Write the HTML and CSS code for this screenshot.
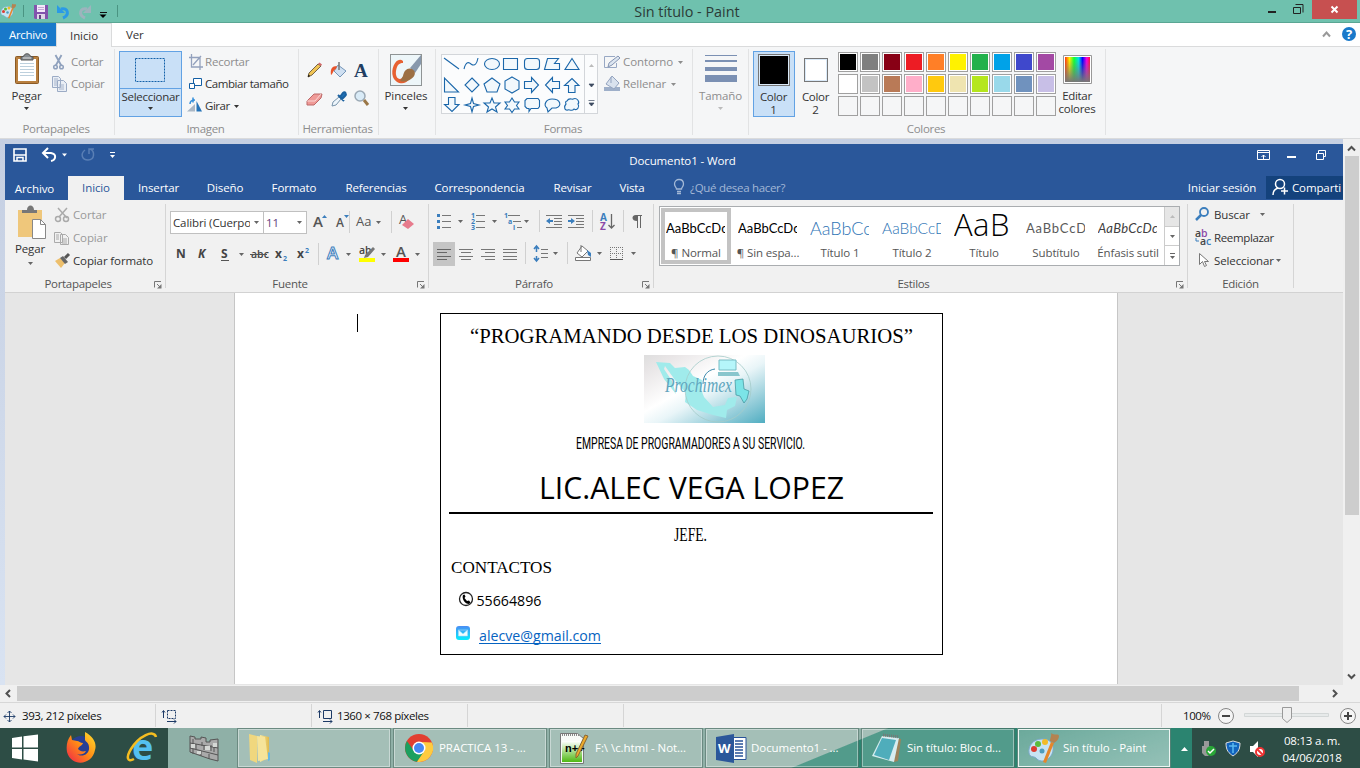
FILE: index.html
```
<!DOCTYPE html>
<html lang="es">
<head>
<meta charset="utf-8">
<title>Sin título - Paint</title>
<link rel="stylesheet" href="styles.css">
</head>
<body>
<svg class="defs" width="0" height="0">
  <defs>
    <symbol id="arr" viewBox="0 0 5 3"><path d="M0 0h5L2.5 3z" fill="currentColor"/></symbol>
    <symbol id="launch" viewBox="0 0 8 8"><path d="M.5 6.500V.5H7M3 3l3 3" fill="none" stroke="#777"/><path d="M7.500 3v4.500H3z" fill="#777"/></symbol>
    <symbol id="palette" viewBox="0 0 32 32"><path d="M15 7C6 7 1 14 2 21c1 5 5 3 7 5 2 3 8 5 13 0 6-5 7-19-7-19z" fill="#c7e3f3" stroke="#7ba9cb"/><circle cx="7" cy="17" r="3" fill="#dc3c31"/><circle cx="11" cy="12" r="3" fill="#5cbb3c"/><circle cx="18" cy="10" r="3" fill="#f3bb27"/><circle cx="15" cy="19" r="2.500" fill="#4e9cbd"/><path d="M24 10l3 1-8 20-3-1z" fill="#e5862b"/><path d="M23 9c0-3 2-6 1-8 3 3 8 0 8 3s-2 5-5 7z" fill="#b48351"/></symbol>
    <linearGradient id="rainbow"><stop stop-color="#f31"/><stop offset=".18" stop-color="#fe0"/><stop offset=".36" stop-color="#1f3"/><stop offset=".55" stop-color="#0de"/><stop offset=".7" stop-color="#00f"/><stop offset=".87" stop-color="#f0d"/><stop offset="1" stop-color="#f13"/></linearGradient>
    <linearGradient id="fade" x2="0" y2="1"><stop offset=".1" stop-color="#777" stop-opacity="0"/><stop offset="1" stop-color="#777"/></linearGradient>
    <linearGradient id="logobg" x2="1" y2="1"><stop stop-color="#dedede"/><stop offset=".12" stop-color="#e8e5e6"/><stop offset=".42" stop-color="#fff"/><stop offset=".55" stop-color="#e9f5f8"/><stop offset="1" stop-color="#50adc1"/></linearGradient>
    <linearGradient id="mailbg" x2="0" y2="1"><stop stop-color="#4b8df4"/><stop offset="1" stop-color="#04efff"/></linearGradient>
    <linearGradient id="fold"><stop stop-color="#f9e9a0"/><stop offset="1" stop-color="#dfba4e"/></linearGradient>
    <linearGradient id="green" x2="0" y2="1"><stop stop-color="#fff"/><stop offset="1" stop-color="#4fb812"/></linearGradient>
    <linearGradient id="fox" x1="1" y1="0" x2="0" y2="1"><stop stop-color="#ffe32e"/><stop offset=".5" stop-color="#ff8a16"/><stop offset="1" stop-color="#f0204d"/></linearGradient>
  </defs>
</svg>

<header class="titlebar">
  <div class="quick">
    <svg width="17" height="17"><use href="#palette" width="16" height="16"/></svg>
    <svg width="17" height="17"><path d="M6.500 2v12" stroke="#4a9482"/></svg>
    <svg width="15" height="17"><path d="M0 2h14v14H1l-1-1z" fill="#8254ad"/><path d="M3 2h8v7H3z" fill="#f3e9fa"/><path d="M4 4.500h6M4 6.500h6" stroke="#c3a9d6"/><path d="M3 11h8v5H3z" fill="#dfd6e8"/><path d="M5 12h2v4H5z" fill="#634383"/></svg>
    <svg width="20" height="17"><path d="M8 2v8h8z" fill="#2a9ae6"/><path d="M12 6c7-2 9 6 2 9" fill="none" stroke="#2a9ae6" stroke-width="3"/></svg>
    <svg width="20" height="17"><path d="M22 2v8h-8z" fill="#9db4bd"/><path d="M18 6c-7-2-9 6-2 9" fill="none" stroke="#9db4bd" stroke-width="3"/></svg>
    <svg width="29" height="17"><path d="M11 9.500h7" stroke="#111"/><path d="M10.500 11.500h7L14 15z"/><path d="M28.500 2v12" stroke="#4a9482"/></svg>
  </div>
  <h1 class="wintitle">Sin título - Paint</h1>
  <div class="winbtns">
    <svg width="44" height="22"><path d="M12 12h8" stroke="#222" stroke-width="2"/><path d="M37.500 7.500h7v6h-7zM39.500 4.500h7.500v8" fill="none" stroke="#222"/></svg>
    <button class="close" aria-label="Cerrar"><svg width="9" height="9"><path d="M1.500 1.500l6 6m0-6l-6 6" stroke="#fff" stroke-width="2"/></svg></button>
  </div>
</header>

<nav class="ptabs">
  <span class="file">Archivo</span><span class="active">Inicio</span><span class="ver">Ver</span>
  <svg width="38" height="22"><path d="M1 13.500l3.500-4 3.500 4" fill="none" stroke="#999" stroke-width="2"/><circle cx="27" cy="11" r="7" fill="#1979ca"/><text x="27" y="15.500" text-anchor="middle" class="help">?</text></svg>
</nav>

<section class="pribbon">
  <div class="pg g-clip">
    <div class="body">
      <div class="big c-paste"><svg width="26" height="39"><rect x="1.500" y="7.500" width="23" height="27" rx="1" fill="#b9803f" stroke="#8b5a25"/><path d="M4 10h18v22H4z" fill="#fff"/><path d="M6 14.500h14m-14 3h14m-14 3h14m-14 3h14m-14 3h14" stroke="#bdd0dd"/><path d="M7 11V8l3-1c0-3 6-3 6 0l3 1v3z" fill="#858b91" stroke="#555"/><path d="M9 9h8" stroke="#ddd"/></svg><span>Pegar</span><svg class="a" viewBox="0 0 5 3"><use href="#arr"/></svg></div>
      <div class="rows dis">
        <div><svg width="18" height="20"><path d="M2.500 3l6 11m0-11l-6 11" stroke="#8fa1bd" stroke-width="1.800"/><circle cx="2.500" cy="15" r="1.800" fill="none" stroke="#8fa1bd" stroke-width="1.500"/><circle cx="8.500" cy="15" r="1.800" fill="none" stroke="#8fa1bd" stroke-width="1.500"/></svg>Cortar</div>
        <div><svg width="18" height="20"><path d="M-.5 2.500h6l2 2v9h-8zM4.500 6.500h6l3 3v8h-9z" fill="#e9eef5" stroke="#9babc5"/><path d="M1 5h4m-4 2h3m-3 2h3m-3 2h3m2 0h5m-5 2h5m-5 2h5" stroke="#a6b4cb"/></svg>Copiar</div>
      </div>
    </div><footer>Portapapeles</footer>
  </div>
  <div class="pg g-img">
    <div class="body">
      <div class="selbtn"><svg width="61" height="36"><rect x="15.500" y="6.500" width="29" height="23" fill="none" stroke="#1261a8" stroke-dasharray="2 1"/></svg><span>Seleccionar</span><svg class="a" viewBox="0 0 5 3"><use href="#arr"/></svg></div>
      <div class="rows">
        <div class="dis"><svg width="17" height="20"><path d="M3.500 2v13H15M1 5.500h11V18M5 13l8-9" fill="none" stroke="#93a1bd" stroke-width="1.300"/></svg>Recortar</div>
        <div><svg width="17" height="20"><path d="M5.500 4.500h8v7h-8z" fill="#fff" stroke="#145fa4"/><path d="M1.500 9.500h5v5h-5z" fill="#fff" stroke="#145fa4"/></svg>Cambiar tamaño</div>
        <div><svg width="17" height="20"><path d="M-1 15.500L7 8v7.500z" fill="#aab7c5"/><path d="M8.500 15.500V5L14 15.500z" fill="#2573b8"/><path d="M2 8c0-4 3-4 5-4M5 1.500v5" stroke="#348fdb" fill="none" stroke-width="1.500"/></svg>Girar<svg class="a" viewBox="0 0 5 3"><use href="#arr"/></svg></div>
      </div>
    </div><footer>Imagen</footer>
  </div>
  <div class="pg g-tools">
    <div class="tools">
      <svg><path d="M2 16l1-4 9-9 3 2-9 9z" fill="#f0c454" stroke="#756447"/><path d="M12 3l1.500-1.500 2.500 2L15 5z" fill="#d36a6a"/><path d="M2 16l.6-2.500L4 15z"/></svg>
      <svg><path d="M8 4l8 6-6 6-6-6z" fill="#cfe0f2" stroke="#7596b8"/><path d="M9 1v8" stroke="#777" stroke-width="1.500"/><path d="M7 5C2 5 0 8 1 14c2-1 2-5 5-6z" fill="#e8542b"/></svg>
      <svg><text x="1" y="16" class="bigA">A</text></svg>
      <svg><path d="M1 12l7-7h8l-1 4-7 7H1z" fill="#ef9a97" stroke="#bc6868"/><path d="M1 12h8l6-7" fill="none" stroke="#fff" opacity=".6"/></svg>
      <svg><path d="M2 17l1-4 6-5 2 2-5 6z" fill="#edf5fb" stroke="#7894ab"/><path d="M8 6l6 6M10 8l3-4c2-2 4 1 2 3l-3 3z" fill="#1e72ba" stroke="#1b619f" stroke-width="2"/></svg>
      <svg><circle cx="7" cy="7" r="5" fill="#d9ebf7" stroke="#9ba9b5" stroke-width="1.500"/><path d="M11 11l4 5" stroke="#9a7747" stroke-width="3"/></svg>
    </div><footer>Herramientas</footer>
  </div>
  <div class="pg g-brush">
    <div class="body"><div class="big"><svg width="32" height="39"><rect x=".5" y="5.500" width="31" height="31" fill="#edf6f9" stroke="#8f9495"/><path d="M13 12C7 7 0 19 3 28c3 7 12 9 16 2l-5-3c-4 6-9 2-8-5 1-6 3-8 7-8z" fill="#e76132"/><path d="M20 19L31 6v9l-6 9z" fill="#8798ac"/><path d="M13 27c1-6 5-9 9-7s4 7-1 10c-4 3-8 3-11 2z" fill="#9c7044"/></svg><span>Pinceles</span><svg class="a" viewBox="0 0 5 3"><use href="#arr"/></svg></div></div>
  </div>
  <div class="pg g-shapes">
    <div class="body">
      <div class="gallery">
        <svg width="142" height="58" fill="#f2f8fc" stroke="#1b67aa" stroke-width="1.100"><path d="M2 3l15 11"/><path d="M22 14c2-8 5-7 7-5 4 3 6-1 7-6" fill="none"/><ellipse cx="50" cy="9" rx="7.500" ry="5.500"/><path d="M61.500 3.500h14v11h-14z"/><rect x="82.500" y="3.500" width="15" height="11" rx="3"/><path d="M102.500 14.500l3-11h11l-4 5h5v6z"/><path d="M130 3.500l7 11h-14z"/>
        <path d="M2.500 23v14h14z"/><path d="M30 23l7 7-7 7-7-7z"/><path d="M50 23l8 6-3 8H45l-3-8z"/><path d="M70 22l7 4v8l-7 4-7-4v-8z"/><path d="M82.500 26.500h7v-4l7 7.500-7 7.500v-4h-7z"/><path d="M117.500 26.500h-7v-4l-7 7.500 7 7.500v-4h7z"/><path d="M126.500 37.500v-7h-4l7.500-7 7 7h-4v7z"/>
        <path d="M6.500 42.500v7h-4l7.500 7 7-7h-4v-7z"/><path d="M30 43l1.500 5.500L37 50l-5.500 1.500L30 57l-1.500-5.500L23 50l5.500-1.500z"/><path d="M50 43l2 5h6l-4.500 4 1.500 5-5-3-5 3 1.500-5-4.500-4h6z"/><path d="M70 43l2.500 4H77l-2.500 3.500L77 54h-4.500L70 57.500 67.500 54H63l2.500-3.500L63 47h4.500z"/><path d="M85 43.500h11l1.500 2v6l-1.500 2h-7l-2 3v-3h-2l-2-2v-6z"/><path d="M105 53c-4-3-1-9 5-9 9 0 10 7 4 9h-4l-4 4z"/><path d="M125 46c2-4 5-1 6-2 4-2 7 3 5 5 2 3-1 7-4 5-2 3-5 0-6 1-4 1-4-4-2-6-1-2 0-3 1-3z"/></svg>
        <div class="gscroll"><svg width="12" height="58"><path d="M4 12h5L6.500 9z" fill="#bbb"/><path d="M4 29h5l-2.500 3zM4 48h5l-2.500 3zM3.500 45.500h6" fill="#3c4a60" stroke="#3c4a60" stroke-width=".7"/></svg></div>
      </div>
      <div class="rows dis">
        <div><svg width="20" height="20"><path d="M12 4.500H1.500v11h12V11" fill="none" stroke="#98a8c4"/><path d="M5 15l1-4 9-7 2 2-8 7z" fill="#dce5f0" stroke="#8494b2"/></svg>Contorno<svg class="a" viewBox="0 0 5 3"><use href="#arr"/></svg></div>
        <div><svg width="20" height="20"><path d="M1 13h16v4H1z" fill="#9eafc9"/><path d="M9 2l7 7-5 6-8-5z" fill="#d9e2ee" stroke="#93a3bf"/><path d="M8 3v6" stroke="#93a3bf"/></svg>Rellenar<svg class="a" viewBox="0 0 5 3"><use href="#arr"/></svg></div>
      </div>
    </div><footer>Formas</footer>
  </div>
  <div class="pg g-size"><div class="body"><div class="big dis"><svg width="32" height="39" fill="#7b90b3"><path d="M0 6h32v1H0zM0 11h32v2H0zM0 18h32v4H0zM0 26h32v7H0z"/></svg><span>Tamaño</span><svg class="a" viewBox="0 0 5 3"><use href="#arr"/></svg></div></div></div>
  <div class="pg g-colors">
    <div class="body">
      <div class="color c1"><i></i><span>Color<br>1</span></div>
      <div class="color c2"><i></i><span>Color<br>2</span></div>
      <div class="swatches"><i class="k0"></i><i class="k1"></i><i class="k2"></i><i class="k3"></i><i class="k4"></i><i class="k5"></i><i class="k6"></i><i class="k7"></i><i class="k8"></i><i class="k9"></i><i class="l0"></i><i class="l1"></i><i class="l2"></i><i class="l3"></i><i class="l4"></i><i class="l5"></i><i class="l6"></i><i class="l7"></i><i class="l8"></i><i class="l9"></i><i></i><i></i><i></i><i></i><i></i><i></i><i></i><i></i><i></i><i></i></div>
      <div class="edit"><svg width="28" height="39"><path d="M.5 6.500h28v28H.5z" fill="#fff" stroke="#999"/><path d="M2 8h25v25H2z" fill="url(#rainbow)"/><path d="M2 8h25v25H2z" fill="url(#fade)"/></svg><span>Editar<br>colores</span></div>
    </div><footer>Colores</footer>
  </div>
</section>

<main class="canvas">
  <div class="work">
    <div class="word">
      <div class="wtitle">
        <svg class="wq" width="120" height="32" fill="none" stroke="#fff"><path d="M9 5h12v12H9z" stroke-width="1.600" /><path d="M9 11h12" stroke-width="1.500"/><path d="M12 17v-3.500h6V17" stroke-width="1.500"/><path d="M39 9h7c6 1 5 7 0 8" stroke-width="2"/><path d="M43 4l-5 5 5 5" stroke-width="2"/><path d="M57 9.500h5l-2.500 3z" fill="#fff" stroke="none"/><path d="M80 6c-5 4-3 10 3 10 7 0 7-9 2-11m-1 5V5h5" stroke="#5a7fb5" stroke-width="1.500"/><path d="M105 8.500h5"/><path d="M105 11h5l-2.500 3z" fill="#fff" stroke="none"/></svg>
        <span>Documento1 - Word</span>
        <svg class="wb" width="90" height="32" fill="none" stroke="#fff"><path d="M4.500 6.500h12v9h-12zM4 8.500h13M10.500 15v-4m-2 2l2-2 2 2"/><path d="M34 13h9" stroke-width="2"/><path d="M63.500 9.500h7v6h-7zM65.500 9V6.500h7v6H71"/></svg>
      </div>
      <nav class="wtabs"><span>Archivo</span><span class="on">Inicio</span><span>Insertar</span><span>Diseño</span><span>Formato</span><span>Referencias</span><span>Correspondencia</span><span>Revisar</span><span>Vista</span>
        <span class="tell"><svg width="17" height="18"><path d="M3.500 12c0-2-2-2-2-5 0-6 9-6 9 0 0 3-2 3-2 5zM4 14.500h4M4 16.500h4" fill="none" stroke="#a3b8d6" stroke-width="1.300"/></svg>¿Qué desea hacer?</span>
        <span class="login">Iniciar sesión</span>
        <span class="share"><svg width="20" height="18" fill="none" stroke="#fff" stroke-width="1.500"><circle cx="8" cy="6" r="4.500"/><path d="M1 17c0-4 2-6 5-7m3 3h7m-3.500-3.500v7"/></svg>Comparti</span>
      </nav>
      <section class="wribbon">
        <div class="wg w-clip">
          <div class="wbody">
            <div class="wbig"><svg width="32" height="37"><path d="M4 6h24v27H4z" fill="#efc77b"/><path d="M8 9V6h5c0-6 7-6 7 0h3v3z" fill="#777"/><path d="M18.500 15.500h8l5 5v14h-13z" fill="#fff" stroke="#888"/><path d="M26.500 15.500v5h5" fill="none" stroke="#888"/></svg><span>Pegar</span><svg class="a" viewBox="0 0 5 3"><use href="#arr"/></svg></div>
            <div class="rows">
              <div class="dis"><svg width="18" height="18" fill="none" stroke="#aaa" stroke-width="1.500"><path d="M3 2l9 10m0-10L4 11"/><circle cx="3" cy="13" r="2.500"/><circle cx="11" cy="13" r="2.500"/></svg>Cortar</div>
              <div class="dis"><svg width="18" height="18" fill="#f1f1f1" stroke="#aaa"><path d="M-.5 3.500h6l2 2v8h-8zM5.500 5.500h5l3 3v7h-8z"/><path d="M1 6h3M1 8h3m-3 2h3m3 0h5m-5 2h5m-5 2h5"/></svg>Copiar</div>
              <div><svg width="18" height="18"><path d="M0 9l5-3 5 5-4 5z" fill="#edbf6c"/><path d="M5 6l3-2 5 6-3 2z" fill="#666"/><path d="M10 6l4-4" stroke="#555" stroke-width="3"/></svg>Copiar formato</div>
            </div>
          </div><footer><span>Portapapeles</span><svg><use href="#launch"/></svg></footer>
        </div>
        <div class="wg w-font">
          <div class="wbody col">
            <div class="f1"><span class="combo"><b>Calibri (Cuerpo)</b><svg class="a" viewBox="0 0 5 3"><use href="#arr"/></svg></span><span class="combo two"><b>11</b><svg class="a" viewBox="0 0 5 3"><use href="#arr"/></svg></span>
              <svg><text x="6" y="16" class="g15">A</text><path d="M15 7h5l-2.500-3z" fill="#3b7ebd"/></svg><svg><text x="6" y="16" class="g13 m">A</text><path d="M14 4h5l-2.500 3z" fill="#3b7ebd"/></svg><svg><path d="M1.500 0v22" stroke="#d0d0d0"/></svg><svg><text x="0" y="15" class="g13">Aa</text><path d="M20 10h5l-2.500 3z" fill="#666"/></svg><svg><path d="M1.500 0v22" stroke="#d0d0d0"/></svg><svg><text x="0" y="13" class="g13">A</text><path d="M3 14l6-6 6 5-6 5z" fill="#e77b8d"/></svg></div>
            <div class="f2"><svg><text y="17" class="bd">N</text></svg><svg><text y="17" class="bd it">K</text></svg><svg><text y="17" class="bd">S</text><path d="M0 19.500h8" stroke="#555"/><path d="M18 12h5l-2.500 3z" fill="#666"/></svg><svg><text y="17" class="bs">abc</text><path d="M-1 13.500h17" stroke="#555"/></svg><svg><text y="17" class="bd">x</text><text x="8" y="20" class="sub">2</text></svg><svg><text y="17" class="bd">x</text><text x="8" y="12" class="sub">2</text></svg><svg><path d="M.5 2v22" stroke="#d0d0d0"/></svg><svg><text y="18" class="glow">A</text><path d="M19 12h5l-2.500 3z" fill="#666"/></svg><svg><text y="13" class="bs">ab</text><path d="M6 14l8-8 2 2-7 8-4 1z" fill="#777"/><path d="M0 17h16v4H0z" fill="#ff0"/><path d="M22 12h5l-2.500 3z" fill="#666"/></svg><svg><text x="3" y="16" class="g15">A</text><path d="M0 17h16v4H0z" fill="#f00"/><path d="M22 12h5l-2.500 3z" fill="#666"/></svg></div>
          </div><footer><span>Fuente</span><svg><use href="#launch"/></svg></footer>
        </div>
        <div class="wg w-par">
          <div class="wbody col">
            <div class="p1">
              <svg><path d="M5 5.500h9m-9 6h9m-9 6h9" stroke="#777"/><path d="M0 4h3v3H0zm0 6h3v3H0zm0 6h3v3H0z" fill="#3b7ebd"/><path d="M21 10h5l-2.500 3z" fill="#666"/></svg>
              <svg><path d="M5 5.500h9m-9 6h9m-9 6h9" stroke="#777"/><text y="8" class="num">1</text><text y="14" class="num">2</text><text y="20" class="num">3</text><path d="M21 10h5l-2.500 3z" fill="#666"/></svg>
              <svg><path d="M4 5.500h12m-7 6h8m-4 6h5" stroke="#777"/><text y="8" class="num">1</text><text x="4" y="14" class="num">a</text><text x="9" y="20" class="num">i</text><path d="M20 10h5l-2.500 3z" fill="#666"/></svg>
              <svg><path d="M.5 0v22" stroke="#d0d0d0"/></svg>
              <svg><path d="M0 5.500h16M8 8.500h8m-8 3h8m-8 3h8M0 17.500h16" stroke="#777"/><path d="M0 11l4-3v2h3v2H4v2z" fill="#3b7ebd"/></svg>
              <svg><path d="M0 5.500h16M8 8.500h8m-8 3h8m-8 3h8M0 17.500h16" stroke="#777"/><path d="M7 11L3 8v2H0v2h3v2z" fill="#3b7ebd"/></svg>
              <svg><path d="M.5 0v22" stroke="#d0d0d0"/></svg>
              <svg><text y="11" class="az">A</text><text y="20" class="az z">Z</text><path d="M11.500 4v14m-3-3l3 3 3-3" fill="none" stroke="#666" stroke-width="1.300"/></svg>
              <svg><path d="M.5 0v22" stroke="#d0d0d0"/></svg>
              <svg><path d="M5.500 5v13M8.500 5v13M4 5.500h6" stroke="#666"/><path d="M5 5C-1 4-1 11 5 11z" fill="#666"/></svg>
            </div>
            <div class="p2">
              <svg class="sel"><path d="M4 7.500h14M4 10.500h10M4 14.500h14M4 17.500h10" stroke="#666"/></svg>
              <svg><path d="M4 7.500h14M6 10.500h10M4 14.500h14M6 17.500h10" stroke="#777"/></svg>
              <svg><path d="M4 7.500h14M8 10.500h10M4 14.500h14M8 17.500h10" stroke="#777"/></svg>
              <svg><path d="M4 7.500h14M4 10.500h14M4 14.500h14M4 17.500h14" stroke="#777"/></svg>
              <svg><path d="M4.500 0v22" stroke="#d0d0d0"/></svg>
              <svg><path d="M3.500 5v5m0 4v5M1 7l2.500-3L6 7M1 16l2.500 3L6 16" fill="none" stroke="#3b7ebd" stroke-width="1.500"/><path d="M8 7.500h7m-7 4h7m-7 4h7" stroke="#777"/><path d="M20 10h5l-2.500 3z" fill="#666"/></svg>
              <svg><path d="M.5 0v22" stroke="#d0d0d0"/></svg>
              <svg><path d="M7 4l6 5-6 6-5-4zM6 3v7M.5 15.500h15v3H.5z" fill="#fff" stroke="#777"/><path d="M12 8l4 3v4l-3-2z" fill="#3b7ebd"/><path d="M22 10h5l-2.500 3z" fill="#666"/></svg>
              <svg><path d="M.5 5v12M12.500 5v12M6.500 5v12M0 5.500h13M0 11.500h13" stroke="#777" stroke-dasharray="1 1"/><path d="M0 17.500h13" stroke="#555"/><path d="M21 10h5l-2.500 3z" fill="#666"/></svg>
            </div>
          </div><footer><span>Párrafo</span><svg><use href="#launch"/></svg></footer>
        </div>
        <div class="wg w-sty">
          <div class="wbody"><div class="styles">
            <div class="st cur"><p>AaBbCcDc</p><span>¶ Normal</span></div>
            <div class="st"><p>AaBbCcDc</p><span>¶ Sin espa...</span></div>
            <div class="st"><p class="t1">AaBbCc</p><span>Título 1</span></div>
            <div class="st"><p class="t2">AaBbCcD</p><span>Título 2</span></div>
            <div class="st"><p class="t0">AaB</p><span>Título</span></div>
            <div class="st"><p class="ts">AaBbCcD</p><span>Subtítulo</span></div>
            <div class="st"><p class="te">AaBbCcDc</p><span>Énfasis sutil</span></div>
            <div class="sb"><i><svg class="a up" viewBox="0 0 5 3"><use href="#arr"/></svg></i><i><svg class="a" viewBox="0 0 5 3"><use href="#arr"/></svg></i><i class="more"><svg class="a" viewBox="0 0 5 3"><use href="#arr"/></svg></i></div>
          </div></div><footer><span>Estilos</span><svg><use href="#launch"/></svg></footer>
        </div>
        <div class="wg w-ed">
          <div class="wbody"><div class="rows">
            <div><svg width="19" height="18"><circle cx="9" cy="6" r="4" fill="none" stroke="#3b7ebd" stroke-width="1.800"/><path d="M6 9l-5 5" stroke="#3b7ebd" stroke-width="2.500"/></svg>Buscar<svg class="a far" viewBox="0 0 5 3"><use href="#arr"/></svg></div>
            <div><svg width="19" height="18"><text x="0" y="8" class="bs">a<tspan fill="#8b4aa8">b</tspan></text><text x="5" y="16" class="bs">a<tspan fill="#3b7ebd">c</tspan></text><path d="M1 9v3h3" fill="none" stroke="#3b7ebd"/></svg>Reemplazar</div>
            <div><svg width="19" height="18"><path d="M4.500 1.500v11l3-3 2 5 2-1-2-4h4z" fill="#fff" stroke="#777"/></svg>Seleccionar<svg class="a" viewBox="0 0 5 3"><use href="#arr"/></svg></div>
          </div></div><footer><span>Edición</span></footer>
        </div>
      </section>
      <section class="doc">
        <div class="page">
          <i class="caret"></i>
          <article class="card">
            <svg width="501" height="340">
              <text x="29" y="29" textLength="443" lengthAdjust="spacingAndGlyphs" class="cserif" font-size="22">“PROGRAMANDO DESDE LOS DINOSAURIOS”</text>
              <g transform="translate(203 41)"><path d="M0 0h121v68H0z" fill="url(#logobg)"/><path d="M12 7l14 1 5 5 10-1 4 3 4 6 9 4-1 9 3 8 9 10 12-2 3-7 9-1-2 9-8 4-1 8-13-3-16-5-12-8 1-9-11-13-10-14-1 3 8 12 4 13-12-15z" fill="#a0ebeb"/><circle cx="74" cy="34" r="33" fill="none" stroke="#a5cbc9" stroke-width=".8"/><path d="M75 5h17v10H75z" fill="#b5f6fa" stroke="#78bcc4"/><path d="M74 17h20l2 4H74z" fill="#89c6cd"/><path d="M91 25l8-1 1 10 5 2-2 8-3 4-4-7-4-1z" fill="#7be4e7" stroke="#3d9099" stroke-width=".7"/><path d="M59 29c0-8 4-14 12-15" fill="none" stroke="#408caf"/><text x="21" y="37" textLength="67" lengthAdjust="spacingAndGlyphs" class="brand">Prochimex</text></g>
              <text x="135" y="135" textLength="229" lengthAdjust="spacingAndGlyphs" class="cond">EMPRESA DE PROGRAMADORES A SU SERVICIO.</text>
              <text x="98" y="185" textLength="305" lengthAdjust="spacingAndGlyphs" class="name">LIC.ALEC VEGA LOPEZ</text>
              <path d="M8 199h484" stroke="#000" stroke-width="2"/>
              <text x="233" y="227" textLength="33" lengthAdjust="spacingAndGlyphs" class="cserif" font-size="18">JEFE.</text>
              <text x="10" y="259" textLength="101" lengthAdjust="spacingAndGlyphs" class="cserif" font-size="17">CONTACTOS</text>
              <circle cx="25" cy="285" r="6.500" fill="#fff" stroke="#222" stroke-width="1.300"/><path d="M22 281l1.500-.5 1 2-1 1.500 2.500 3 2-.5 1.500 2-1.500 1.500c-4 0-7.500-5-6-9z"/>
              <text x="35.500" y="292" textLength="65" lengthAdjust="spacingAndGlyphs" class="small">55664896</text>
              <rect x="15" y="312" width="14" height="14" rx="3" fill="url(#mailbg)"/><path d="M17.500 316h9v6h-9zl4.500 4 4.500-4" fill="#eefcff" stroke="#abdcf7" stroke-width=".6"/>
              <a href="#mail"><text x="38" y="327" textLength="122" lengthAdjust="spacingAndGlyphs" class="small link">alecve@gmail.com</text></a><path d="M38 329.500h122" stroke="#0563c1"/>
            </svg>
          </article>
        </div>
      </section>
    </div>
    <div class="vscroll"><svg width="17" height="17"><path d="M5 11.500L8.500 8l3.500 3.500" fill="none" stroke="#505050" stroke-width="2"/></svg><i></i><svg width="17" height="17"><path d="M5 6.500l3.500 3.500L12 6.500" fill="none" stroke="#505050" stroke-width="2"/></svg></div>
  </div>
  <div class="hscroll"><svg width="17" height="17"><path d="M10 5L6.500 8.500 10 12" fill="none" stroke="#505050" stroke-width="2"/></svg><i></i><svg width="17" height="17"><path d="M7 5l3.500 3.500L7 12" fill="none" stroke="#505050" stroke-width="2"/></svg></div>
</main>

<div class="status">
  <span class="s0"><svg width="22" height="16"><path d="M4 8.500h11M9.500 3v11M6 6.500l-2 2 2 2m7-4l2 2-2 2M7.500 5l2-2 2 2m-4 7l2 2 2-2" fill="none" stroke="#1c3a66" stroke-width=".9"/></svg>393, 212 píxeles</span>
  <span><svg width="22" height="16" fill="none" stroke="#1c3a66"><path d="M5.500 2.500h8v8h-8z" stroke-dasharray="2 1"/><path d="M1.500 3v7M0 4.500l1.500-2 1.500 2M5 13.500h9m-2-2l2 2-2 2"/></svg></span>
  <span><svg width="19" height="16" fill="none" stroke="#1c3a66"><path d="M5.500 2.500h8v8h-8zM1.500 3v7M0 4.500l1.500-2 1.500 2M5 13.500h9m-2-2l2 2-2 2"/></svg>1360 × 768 píxeles</span>
  <span></span><span class="grow"></span>
  <span class="zoom">100%<svg width="149" height="24"><circle cx="15" cy="12" r="7.500" fill="#f5f5f5" stroke="#888"/><path d="M11 12h8" stroke="#444" stroke-width="2"/><path d="M33.500 9.500h84v3h-84z" fill="#e7eaea" stroke="#d3d7d7"/><path d="M71.500 3.500h9v11l-4.500 4-4.500-4z" fill="#efefef" stroke="#999"/><circle cx="137" cy="12" r="7.500" fill="#f5f5f5" stroke="#888"/><path d="M133 12h8m-4-4v8" stroke="#444" stroke-width="2"/></svg></span>
</div>

<footer class="taskbar">
  <div class="dark left">
    <svg width="50" height="40"><path d="M12 10l10-1.500v11H12zm11.500-1.700L38 6.500v13H23.500zM12 21h10v10.500L12 30zm11.500 0H38v12.500l-14.500-2z" fill="#fff"/></svg>
    <svg width="62" height="40"><circle cx="31" cy="20" r="12" fill="#283f94"/><path d="M35 4c9 5 12 12 10 18-3 16-24 17-28 2-1-6 0-12 4-17l1 5 5 1c2 0 3 2 6 2-1 3-4 3-5 6 2 2 4 3 8 2-2 4-7 4-9 3 5 4 13 0 12-7 0-4-3-5-4-7z" fill="url(#fox)"/></svg>
    <svg width="56" height="40"><text x="20" y="32" class="ie">e</text><path d="M22 31c-7 4-8-2-3-10C27 8 42 1 44 9" fill="none" stroke="#f5bd21" stroke-width="2.500"/></svg>
  </div>
  <div class="mid">
    <div class="wall"><svg width="32" height="28" fill="#aaa" stroke="#555"><path d="M2 1l5 1v2h6V2l5 1v4h4V5l8-1v22l-8-2L2 17z"/><path d="M2 8l28 5M2 13l28 7M8 9v5m8-4v5m7-5v6M5 4v5m9-2v4m12 1v5M5 14v5m8-3v5m8-2v5"/><path d="M3 9h4v4H3zm14 2h5v4h-5zM9 16h4v3H9zM25 8h4v4h-4z" fill="#d5d8d5" stroke="none"/></svg></div>
    <div class="tb"><svg width="32" height="32"><path d="M13 3l9 2v21l-9 4z" fill="url(#fold)"/><path d="M2 2l8 2v27l-7-3z" fill="#f0d77e"/><path d="M10 4l8 1 3 22-10 2z" fill="#f6e49a"/><path d="M21 20l2 1v7l-2 1z" fill="#65b7e4"/></svg></div>
    <div class="tb"><svg width="32" height="32"><circle cx="16" cy="16" r="14" fill="#e13f31"/><path d="M3.900 9A14 14 0 0 0 14 29.800L22 19l-11 0z" fill="#1ba05f"/><path d="M29 10.500A14 14 0 0 1 14 29.800L22 18l-3-8z" fill="#fecb40"/><circle cx="16" cy="16" r="6.500" fill="#fff"/><circle cx="16" cy="16" r="5" fill="#4688f4"/></svg><span>PRACTICA 13 - ...</span></div>
    <div class="tb"><svg width="32" height="32"><path d="M1.500 1.500h17l6 5v25h-23z" fill="#f8faf7" stroke="#777"/><path d="M3 9h20v21H3z" fill="url(#green)"/><path d="M3 3h17" stroke="#888" stroke-dasharray="1 1" stroke-width="2"/><text x="6" y="20" class="npp">n++</text><path d="M26 3l3 1-10 20-2 2 0-4z" fill="#edaa2b" stroke="#896633"/></svg><span>F:\ \c.html - Not...</span></div>
    <div class="tb"><svg width="32" height="32"><path d="M14 5.500h17v22H14z" fill="#fff" stroke="#285399"/><path d="M20 9h8m-8 3h8m-8 3h8m-8 3h8m-8 3h8m-8 3h8" stroke="#285399" stroke-width="1.500"/><path d="M1 5l18-3v29L1 28z" fill="#2b579a"/><text x="3" y="21" class="wordw">W</text></svg><span>Documento1 - ...</span></div>
    <div class="tb"><svg width="32" height="32"><path d="M12 4l18 3-3 22-4 1z" fill="#9d835b"/><path d="M11 4l17 2-5 24L1 24z" fill="#d7edf0"/><path d="M11 6l14 2-7 20-15-5z" fill="#4fadbb"/><path d="M12 3l16 2" stroke="#777" stroke-dasharray="1 1" stroke-width="3"/></svg><span>Sin título: Bloc d...</span></div>
    <div class="tb act"><svg width="32" height="32"><use href="#palette" width="32" height="32"/></svg><span>Sin título - Paint</span></div>
    <svg class="tray" width="21" height="40"><path d="M10 23h7l-3.500-4z" fill="#fff"/></svg>
  </div>
  <div class="dark right">
    <svg width="80" height="40"><path d="M12 13h5v5h-5zM10 18h9v7l-3 3h-3l-3-3z" fill="#999"/><circle cx="19" cy="23" r="5" fill="#29a637"/><path d="M16 23l2 2 4-4" fill="none" stroke="#fff" stroke-width="1.500"/><path d="M34 15l7-2 7 2c0 8-3 10-7 13-4-3-7-5-7-13z" fill="#1264bd" stroke="#ddd"/><path d="M41 15v10M37 18h8" stroke="#5bb9f1" stroke-width="1.500"/><path d="M58 18h3l5-5v16l-5-5h-3z" fill="#fff"/><circle cx="68" cy="24" r="4" fill="#fff" stroke="#e33" stroke-width="2"/><path d="M65 21l6 6" stroke="#e33" stroke-width="2"/></svg>
    <div class="clock">08:13 a. m.<br>04/06/2018</div>
  </div>
</footer>
</body>
</html>
```
FILE: styles.css
```
*{box-sizing:border-box}
body{margin:0;width:1360px;height:768px;overflow:hidden;font:11.5px/16px "Open Sans","Noto Sans",sans-serif;letter-spacing:-.3px;color:#333;white-space:nowrap}
svg{display:block;flex:none;overflow:visible}
svg text{letter-spacing:0}
.defs{position:absolute}
h1,p{margin:0;font-weight:400}
i{font-style:normal;display:block}
.a{width:5px;height:3px}

.titlebar{height:23px;background:#6fc1ae;border-bottom:1px solid #5aa693;display:flex}
.quick{width:118px;display:flex;padding-top:3px}
.wintitle{flex:1;text-align:center;font-size:14.4px;line-height:24px;letter-spacing:0;color:#2b3b37}
.winbtns{width:104px;display:flex;justify-content:space-between;padding-right:3px}
.close{width:45px;height:19px;border:0;padding:0;background:#c75050;display:grid;place-items:center}
.ptabs{height:24px;background:#fff;border-bottom:1px solid #dadbdc;display:flex;line-height:24px;letter-spacing:-.1px}
.file{width:56px;height:23px;background:#1979ca;color:#fff;text-align:center;letter-spacing:-.3px}
.active{width:56px;height:24px;border:1px solid #dadbdc;border-bottom:0;background:#f5f6f7;text-align:center}
.ver{padding-left:14px;flex:1}
.help{font:bold 13px "Open Sans",sans-serif;fill:#fff}

.pribbon{height:92px;background:#f5f6f7;border-bottom:1px solid #dadbdc;display:flex;padding-top:2px}
.pg{height:86px;border-right:1px solid #e2e3e4}
.pg footer{line-height:17px;text-align:center;color:#8d8d8d;padding-right:2px}
.body{height:71px;display:flex}
.dis{color:#8d8d8d}
.big{display:flex;flex-direction:column;align-items:center;letter-spacing:-.1px}
.big .a{margin-top:3px}
.rows{padding-top:2px}
.rows>div{height:22px;display:flex;align-items:center}
.rows .a{margin-left:5px}
.g-clip{width:115px}
.c-paste{width:53px}
.g-img{width:184px}
.g-img .body{padding-left:4px}
.selbtn{margin-top:2px;width:63px;height:66px;border:1px solid #62a2e4;background:#c9e0f7;display:flex;flex-direction:column;align-items:center}
.selbtn span{border-top:1px solid #62a2e4;width:61px;text-align:center;line-height:15px}
.selbtn .a{margin-top:3px}
.g-img .rows{padding-left:6px;letter-spacing:-.45px}
.g-img .dis{letter-spacing:-.2px}
.g-img .rows .a{margin-left:4px}
.g-tools{width:80px}
.tools{height:71px;display:grid;grid-template-columns:23.500px 23.500px 20px;grid-template-rows:28px 20px;padding:12px 0 0 7px}
.tools svg{width:18px;height:18px}
.bigA{font:bold 19px "Liberation Serif",serif;fill:#213e63}
.g-brush{width:57px}
.g-brush .body{justify-content:center;padding-right:2px}
.g-shapes{width:257px}
.g-shapes .body{padding-left:5px}
.gallery{width:157px;height:60px;margin-top:5px;border:1px solid #d3d6da;background:#fbfcfd;display:flex}
.gscroll{border-left:1px solid #d3d6da}
.g-shapes .rows{padding-left:5px;letter-spacing:-.1px}
.g-size{width:56px}
.g-size .body{padding-left:6px}
.g-size .a{color:#bbb}
.g-colors{width:357px}
.g-colors .body{padding-left:4px}
.color{width:42px;height:66px;margin-top:2px;display:flex;flex-direction:column;align-items:center;line-height:13px;text-align:center}
.color i{width:32px;height:32px;margin:3px 0 4px;background:#000;border:1px solid #777;box-shadow:inset 0 0 0 1px #d9e9f8}
.color span{padding-right:1px}
.c1{background:#c9e0f7;outline:1px solid #62a2e4;outline-offset:-1px}
.c2 i{width:24px;height:24px;background:#fff;margin:7px 0 8px}
.swatches{display:grid;grid-template-columns:repeat(10,20px);grid-auto-rows:20px;gap:2px;margin:3px 0 0 1px}
.swatches i{border:1px solid #a0a0a0}
.swatches i[class]{box-shadow:inset 0 0 0 1px #fff}
.k0{background:#000}.k1{background:#7f7f7f}.k2{background:#880015}.k3{background:#ed1c24}.k4{background:#ff7f27}
.k5{background:#fff200}.k6{background:#22b14c}.k7{background:#00a2e8}.k8{background:#3f48cc}.k9{background:#a349a4}
.l0{background:#fff}.l1{background:#c3c3c3}.l2{background:#b97a57}.l3{background:#ffaec9}.l4{background:#ffc90e}
.l5{background:#efe4b0}.l6{background:#b5e61d}.l7{background:#99d9ea}.l8{background:#7092be}.l9{background:#c8bfe7}
.edit{width:42px;text-align:center;line-height:13px;display:flex;flex-direction:column;align-items:center}
.edit span{padding-top:1px}

.canvas{background:#f0f0f0}
.work{height:546px;display:flex;background:linear-gradient(#c5cfe2,#d9e3f2)}
.word{width:1338px;height:541px;margin:5px 0 0 5px;overflow:hidden;background:#e6e6e6;letter-spacing:-.12px}
.wtitle{height:32px;background:#2a579a;color:#fff;display:flex;justify-content:space-between;line-height:34px}
.wtitle span{margin-right:13px}
.wtabs{height:24px;background:#2a579a;color:#fff;display:flex;line-height:23px}
.wtabs span{flex:none;text-align:center;width:69px}
.wtabs span:nth-child(1){width:63px;padding-right:4px;line-height:25px}
.wtabs .on{width:56px;background:#f1f1f1;color:#2a579a}
.wtabs span:nth-child(4){width:64px}
.wtabs span:nth-child(5){width:74px}
.wtabs span:nth-child(6){width:90px}
.wtabs span:nth-child(7){width:117px}
.wtabs span:nth-child(8){width:69px}
.wtabs span:nth-child(9){width:50px}
.wtabs .tell{width:auto;margin-left:16px;color:#a3b8d6;display:flex;padding-top:1px;line-height:22px;letter-spacing:-.3px}
.wtabs .login{margin-left:auto;width:78px}
.wtabs .share{width:77px;margin-left:5px;background:#14427c;display:flex;padding:2px 0 0 6px;line-height:20px;height:23px}
.wribbon{height:93px;background:#f1f1f1;border-bottom:1px solid #d2d2d2;display:flex;padding-top:4px}
.wg{height:84px;border-right:1px solid #d5d5d5}
.wbody{height:72px;display:flex}
.wbody.col{display:block}
.wg footer{display:flex;color:#555;height:16px;letter-spacing:-.3px}
.wg footer span{flex:1;text-align:center}
.wg footer svg{width:8px;height:8px;margin:5px 3px 0}
.wbody .rows{padding:0;margin-top:-1px}
.wbody .rows>div{height:23px}
.wbody .rows .dis{color:#999}
.wbody .a{color:#666}
.w-clip{width:161px}
.wbig{width:50px;display:flex;flex-direction:column;align-items:center}
.wbig .a{margin-top:5px}
.w-font{width:263px}
.f1{display:grid;grid-template-columns:94px 43px 23px 18px 8px 34px 9px 20px;padding:7px 0 0 4px;height:33px}
.f1 svg:not(.a){width:20px;height:20px}
.combo{border:1px solid #c0c0c0;background:#fff;height:23px;display:flex;align-items:center;justify-content:space-between;padding:0 4px 0 2px}
.combo b{font-weight:400;width:77px;overflow:hidden}
.combo.two{border-left:0}
.combo.two b{width:20px;color:#64407c}
.g15,.g13{font:15px "Open Sans",sans-serif;fill:#555}
.g15{font-weight:600}
.g13{font-size:13px}
.m{font-size:12px;font-weight:600}
.f2{display:grid;grid-template-columns:22px 23px 30px 24px 22px 21px 9px 32px 34px 30px;padding:4px 0 0 10px}
.f2 svg,.p1 svg,.p2 svg{width:22px;height:24px}
.bd{font:bold 12px "Open Sans",sans-serif;fill:#444}
.it{font-style:italic}
.bs{font:600 10.5px "Open Sans",sans-serif;fill:#444}
.sub{font:bold 7px "Open Sans",sans-serif;fill:#3b7ebd}
.glow{font:600 17px "Open Sans",sans-serif;fill:#fff;stroke:#3b7ebd;stroke-width:1}
.w-par{width:225px}
.p1{display:grid;grid-template-columns:34px 33px 35px 7px 22px 24px 8px 23px 9px 20px;padding:6px 0 0 8px;height:38px}
.p2{display:grid;grid-template-columns:22px 22px 22px 22px 12px 34px 8px 35px 20px;padding:0 0 0 4px}
.sel{background:#c5c5c5}
.num{font:bold 7px "Open Sans",sans-serif;fill:#3b7ebd}
.az{font:bold 10px "Open Sans",sans-serif;fill:#3b7ebd}
.az.z{fill:#8b4aa8}
.w-sty{width:534px}
.styles{display:flex;width:521px;height:60px;margin:2px 0 0 5px;border:1px solid #aaadb0;background:#fff}
.st{width:72px;text-align:center;height:58px}
.cur{outline:4px solid #c3c3c3;outline-offset:-5px}
.st p{width:59px;height:32px;line-height:42px;overflow:hidden;margin:0 auto 7px 6px;text-align:left;font-family:Lato,sans-serif;font-size:13px;letter-spacing:0;color:#000}
.st p.t1{font-size:18px;font-weight:300;color:#2e74b5}
.st p.t2{font-size:15.5px;font-weight:300;color:#2e74b5}
.st p.t0{font-family:"Open Sans",sans-serif;font-size:31px;font-weight:300;height:26px;margin-top:7px;margin-bottom:6px;line-height:20px;letter-spacing:.5px}
.st p.ts{letter-spacing:.8px;color:#5a5a5a}
.st p.te{font-style:italic;letter-spacing:.3px;color:#404040}
.st span{color:#555;display:block;line-height:14px}
.sb{margin-left:auto;width:15px;border-left:1px solid #ccc}
.sb i{height:19px;border-bottom:1px solid #ccc;display:grid;place-items:center}
.sb i:first-child{background:#e6e6e6;height:20px}
.sb .up{transform:scaleY(-1);color:#bbb}
.sb .more{border-bottom:0}
.more .a{border-top:1px solid #666;height:6px;padding-top:2px}
.w-ed{width:106px}
.w-ed .rows{padding-left:7px}
.w-ed .rows>div:nth-child(2){letter-spacing:-.35px}
.w-ed .rows .a{margin-left:2px}
.w-ed .rows .far{margin-left:10px}
.doc{height:391px}
.page{width:884px;height:391px;margin-left:229px;border:1px solid #c6c6c6;border-width:0 1px;background:#fff;display:flex}
.caret{width:1px;height:18px;background:#000;margin:21px 82px 0 122px}
.card{width:503px;height:342px;border:1px solid #000;margin-top:20px}
.cserif{font-family:"Liberation Serif",serif}
.brand{font:italic 20px "Liberation Serif",serif;fill:#5fa5bd}
.cond{font:400 16.500px Roboto,sans-serif}
.name{font:31px "Open Sans",sans-serif}
.small{font:14px "Open Sans",sans-serif}
.link{fill:#0563c1}
.vscroll{width:17px;background:#f0f0f0;display:flex;flex-direction:column}
.vscroll i{height:359px;margin:0 1px 0 2px;background:#cdcdcd}
.vscroll svg:last-child{margin-top:auto}
.hscroll{height:17px;display:flex;padding-right:17px}
.hscroll i{width:1282px;height:15px;margin-top:1px;background:#cdcdcd}
.hscroll svg:last-child{margin-left:auto}
.status{height:26px;background:#f0f0f0;border-top:1px solid #d7d7d7;display:flex;color:#111;padding-top:1px;letter-spacing:-.4px}
.status span{width:156px;height:23px;border-right:1px solid #d5d5d5;display:flex;align-items:center;padding:0 0 0 6px}
.status .s0{padding-left:0}
.status .grow{width:538px}
.status .zoom{width:198px;border:0;padding:0 0 0 21px;justify-content:space-between}

.taskbar{height:40px;display:flex;color:#fff;letter-spacing:-.05px}
.dark{background:#2d4d45;display:flex}
.left{width:168px}
.right{width:168px}
.mid{width:1024px;display:flex;background:linear-gradient(157.6deg,#8fb0a7 274px,#2b8470 275px)}
.wall{width:69px;padding:7px 0 0 20px}
.tb{width:154px;height:40px;margin-right:2px;border:1px solid rgba(50,85,75,.5);background:rgba(255,255,255,.19);box-shadow:inset 0 0 0 1px rgba(255,255,255,.4);display:flex;align-items:center;padding-left:9px}
.tb span{margin-left:4px}
.tb.act{background:linear-gradient(160deg,rgba(255,255,255,.3),rgba(255,255,255,.5));box-shadow:inset 0 0 0 1px #eef6f3}
.tray{margin-left:-2px}
.clock{text-align:center;line-height:17px;padding-top:4px;margin-left:4px;margin-right:12px;flex:1;letter-spacing:-.2px}
.ie{font:bold 36px "Open Sans",sans-serif;fill:#54c0f0}
.npp{font:bold 11px "Liberation Sans",sans-serif}
.wordw{font:bold 13px "Open Sans",sans-serif;fill:#fff}
```
